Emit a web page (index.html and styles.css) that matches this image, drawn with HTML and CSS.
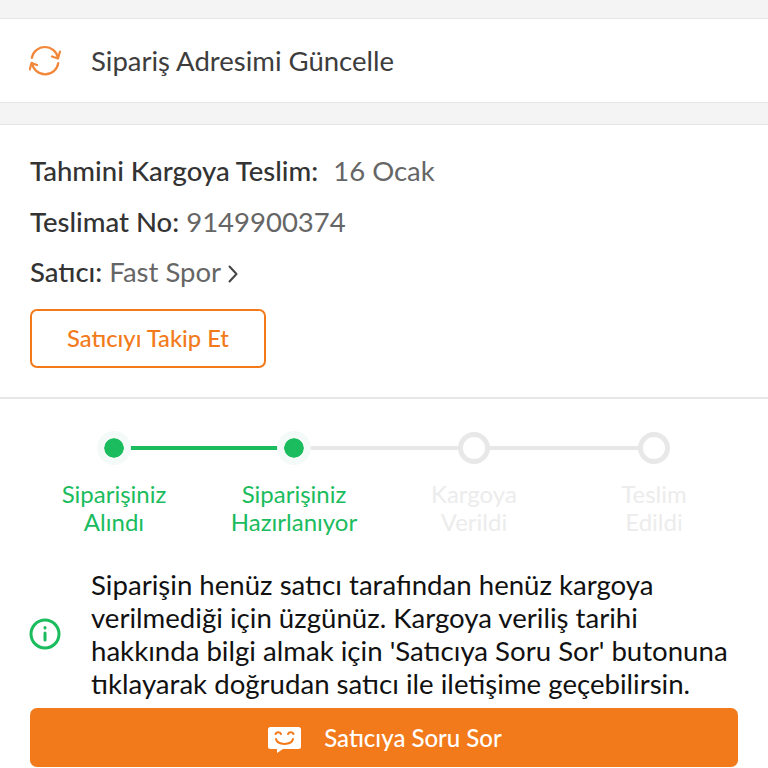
FILE: index.html
```html
<!DOCTYPE html>
<html lang="tr">
<head>
  <meta charset="UTF-8">
  <title>Sipariş Detayı</title>
  <meta name="viewport" content="width=device-width, initial-scale=1.0"/>
  <link rel="stylesheet" href="styles.css">
</head>
<body>

<div class="band band-top"></div>

<div class="address-row">
  <svg class="refresh-icon" viewBox="0 0 32 32" width="32" height="32" fill="none" stroke="#f2873a" stroke-width="2.2" stroke-linecap="round" stroke-linejoin="round">
    <path d="M2.800 13A13.300 13.300 0 0 1 29 13"/>
    <path d="M23 11.500l6 2 2-7"/>
    <path d="M29.300 18A13.300 13.300 0 0 1 3 18"/>
    <path d="M8 20l-5.500-2-1.700 6.500"/>
  </svg>
  <span class="address-text">Sipariş Adresimi Güncelle</span>
</div>

<div class="band"></div>

<div class="seller-card">
  <p class="info-line"><b>Tahmini Kargoya Teslim:</b><span class="value value-date">16 Ocak</span></p>
  <p class="info-line"><b>Teslimat No:</b> <span class="value">9149900374</span></p>
  <p class="info-line"><b>Satıcı:</b> <span class="value">Fast Spor</span>
    <svg class="chevron" viewBox="0 0 10 18" width="10" height="18" fill="none" stroke="#444" stroke-width="2" stroke-linecap="round" stroke-linejoin="round"><path d="M1.500 1.500L8.500 9l-7 7.500"/></svg>
  </p>
  <div class="follow-btn">Satıcıyı Takip Et</div>
</div>

<div class="status-card">
  <div class="stepper">
    <div class="step done">
      <div class="dot"></div>
      <div class="step-label">Siparişiniz<br>Alındı</div>
    </div>
    <div class="step done">
      <div class="dot"></div>
      <div class="step-label">Siparişiniz<br>Hazırlanıyor</div>
    </div>
    <div class="step">
      <div class="dot"></div>
      <div class="step-label">Kargoya<br>Verildi</div>
    </div>
    <div class="step">
      <div class="dot"></div>
      <div class="step-label">Teslim<br>Edildi</div>
    </div>
  </div>

  <div class="notice">
    <svg class="info-icon" viewBox="0 0 32 32" width="32" height="32" fill="none" stroke="#1bbc5e" stroke-width="3" stroke-linecap="round">
      <circle cx="16" cy="16" r="14"/>
      <path d="M16 15v7"/>
      <path d="M16 9.600v.3"/>
    </svg>
    <p class="notice-text">Siparişin henüz satıcı tarafından henüz kargoya verilmediği için üzgünüz. Kargoya veriliş tarihi hakkında bilgi almak için 'Satıcıya Soru Sor' butonuna tıklayarak doğrudan satıcı ile iletişime geçebilirsin.</p>
  </div>

  <div class="ask-btn">
    <svg class="chat-icon" viewBox="0 0 33 26" width="33" height="26">
      <path fill="#fff" d="M2.500 0h28A2.500 2.500 0 0 1 33 2.500v17a2.500 2.500 0 0 1-2.500 2.500H15l-6 4v-4H2.500A2.500 2.500 0 0 1 0 19.500v-17A2.500 2.500 0 0 1 2.500 0z"/>
      <g fill="none" stroke="#f27a1a" stroke-width="2" stroke-linecap="round">
        <path d="M7.500 7c1-2.200 4.500-2.200 5.500 0"/>
        <path d="M20 7c1-2.200 4.500-2.200 5.500 0"/>
        <path d="M8 12c1.500 6.500 15.500 6.500 17 0"/>
      </g>
    </svg>
    <span>Satıcıya Soru Sor</span>
  </div>
</div>

</body>
</html>
```

FILE: styles.css
```css
body {
  margin: 0;
  font-family: Lato, "Open Sans", sans-serif;
  background: #fff;
  color: #333;
  height: 768px;
  overflow: hidden;
}
.band {
  height: 21px;
  background: #f4f4f4;
  border-top: 1px solid #e6e6e6;
  border-bottom: 1px solid #e6e6e6;
}
.band-top {
  height: 18px;
  border-top: none;
}
.address-row {
  display: flex;
  align-items: center;
  height: 83px;
  padding-left: 29px;
}
.refresh-icon {
  margin-right: 30px;
}
.address-text {
  font-size: 27.500px;
  color: #3d3d3d;
}
.seller-card {
  padding: 21px 30px 29px;
  border-bottom: 2px solid #e6e6e6;
}
.info-line {
  margin: 0;
  height: 50.500px;
  line-height: 50.500px;
  font-size: 27.500px;
  color: #333;
  white-space: nowrap;
}
.info-line b {
  font-weight: 500;
}
.value {
  color: #666;
}
.value-date {
  margin-left: 15px;
}
.chevron {
  vertical-align: -1px;
}
.follow-btn {
  width: 232px;
  height: 55px;
  margin-top: 11.500px;
  line-height: 55px;
  text-align: center;
  font-size: 23.700px;
  font-weight: 500;
  color: #f27a1a;
  border: 2px solid #f27a1a;
  border-radius: 7px;
}
.status-card {
  padding-top: 31px;
}
.stepper {
  display: grid;
  grid-template-columns: repeat(4, 180px);
  padding: 0 24px;
}
.step {
  position: relative;
  display: flex;
  flex-direction: column;
  align-items: center;
}
/* line to the next step */
.step::after {
  content: "";
  position: absolute;
  top: 16px;
  left: 50%;
  width: 180px;
  height: 4px;
  background: #e8e8e8;
}
.step:last-child::after {
  display: none;
}
.step:first-child::after {
  background: #1bbc5e;
}
.dot {
  position: relative;
  z-index: 1;
  box-sizing: border-box;
  width: 32px;
  height: 32px;
  margin: 2px 0;
  background: #fff;
  border: 5px solid #e8e8e8;
  border-radius: 50%;
}
.step.done .dot {
  width: 34px;
  height: 34px;
  margin: 1px 0;
  background: #1bbc5e;
  background-clip: padding-box;
  border: 7px solid #f4faf7;
}
.step-label {
  margin-top: 14px;
  font-size: 24px;
  line-height: 28px;
  text-align: center;
  color: #ececec;
}
.step.done .step-label {
  color: #1bbc5e;
}
.notice {
  display: flex;
  align-items: center;
  padding: 32px 30px 0 29px;
}
.info-icon {
  flex: none;
  margin-right: 30px;
}
.notice-text {
  margin: 0;
  font-size: 27.600px;
  line-height: 33px;
  color: #111;
}
.ask-btn {
  display: flex;
  align-items: center;
  justify-content: center;
  gap: 23px;
  height: 59px;
  margin: 8px 30px 0;
  padding-left: 2px;
  background: #f27a1a;
  border-radius: 7px;
  color: #fff;
  font-size: 24px;
  font-weight: 500;
}
.chat-icon {
  margin-top: 5px;
}
```
